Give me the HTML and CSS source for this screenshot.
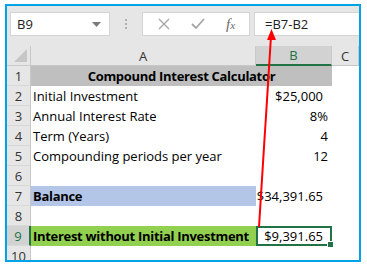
FILE: index.html
```html
<!DOCTYPE html>
<html lang="en">
<head>
    <meta charset="UTF-8">
    <title>Compound Interest Calculator</title>
    <link rel="stylesheet" href="styles.css">
</head>
<body>
    <div class="frame">
        <div class="toolbar">
            <div class="name-box">
                <span>B9</span>
                <svg class="drop" width="9" height="5" viewBox="0 0 9 5"><path d="M0 0h9L4.5 5z" fill="#7a7a7a"/></svg>
            </div>
            <div class="grip"><i></i><i></i><i></i></div>
            <div class="buttons">
                <svg width="14" height="14" viewBox="0 0 14 14"><path d="M2 2l10 10M12 2L2 12" stroke="#a6a6a6" stroke-width="1.4" fill="none"/></svg>
                <svg width="16" height="14" viewBox="0 0 16 14"><path d="M2 7l4 4 8-9" stroke="#a6a6a6" stroke-width="1.8" fill="none"/></svg>
                <span class="fx">f<small>x</small></span>
            </div>
            <div class="formula">=B7-B2</div>
        </div>

        <div class="sheet">
            <div class="corner"><span></span></div>
            <div class="col-head">A</div>
            <div class="col-head active">B</div>
            <div class="col-head">C</div>

            <div class="row-head">1</div>
            <div class="cell title">Compound Interest Calculator</div>
            <div class="cell"></div>

            <div class="row-head">2</div>
            <div class="cell">Initial Investment</div>
            <div class="cell num money">$25,000</div>
            <div class="cell"></div>

            <div class="row-head">3</div>
            <div class="cell">Annual Interest Rate</div>
            <div class="cell num">8%</div>
            <div class="cell"></div>

            <div class="row-head">4</div>
            <div class="cell">Term (Years)</div>
            <div class="cell num">4</div>
            <div class="cell"></div>

            <div class="row-head">5</div>
            <div class="cell">Compounding periods per year</div>
            <div class="cell num">12</div>
            <div class="cell"></div>

            <div class="row-head">6</div>
            <div class="cell"></div>
            <div class="cell"></div>
            <div class="cell"></div>

            <div class="row-head">7</div>
            <div class="cell bold balance">Balance</div>
            <div class="cell num money spill">$34,391.65</div>
            <div class="cell"></div>

            <div class="row-head">8</div>
            <div class="cell"></div>
            <div class="cell"></div>
            <div class="cell"></div>

            <div class="row-head active">9</div>
            <div class="cell bold interest">Interest without Initial Investment</div>
            <div class="cell num money selected">$9,391.65<span class="handle"></span></div>
            <div class="cell"></div>

            <div class="row-head">10</div>
            <div class="cell"></div>
            <div class="cell"></div>
            <div class="cell"></div>
        </div>

        <svg class="arrow" width="356" height="258" viewBox="0 0 356 258">
            <line x1="252" y1="221" x2="264" y2="30" stroke="#ff0000" stroke-width="2"/>
            <path d="M264.5 23l4.5 11h-9z" fill="#ff0000"/>
        </svg>
    </div>
</body>
</html>
```

FILE: styles.css
```css
body {
    margin: 0;
    background-color: #fff;
    font-family: 'Open Sans', sans-serif;
}

.frame {
    position: relative;
    margin: 4px 0 0 5px;
    width: 352px;
    height: 254px;
    border: 2px solid #00a2e8;
    overflow: hidden;
    background-color: #fff;
}

.toolbar {
    height: 40px;
    background-color: #e6e6e6;
    display: flex;
    align-items: flex-start;
    padding-top: 6px;
    box-sizing: border-box;
}

.name-box {
    margin-left: 3px;
    width: 100px;
    height: 24px;
    box-sizing: border-box;
    background-color: #fff;
    border: 1px solid #d4d4d4;
    display: flex;
    align-items: center;
    justify-content: space-between;
    padding: 0 8px 0 6px;
    font-size: 13px;
    color: #222;
}

.grip {
    width: 32px;
    height: 24px;
    display: flex;
    flex-direction: column;
    align-items: center;
    justify-content: center;
    gap: 2px;
}

.grip i {
    width: 2px;
    height: 2px;
    background-color: #b0b0b0;
}

.buttons {
    width: 108px;
    height: 24px;
    box-sizing: border-box;
    background-color: #fff;
    border: 1px solid #d4d4d4;
    display: flex;
    align-items: center;
    justify-content: space-around;
    padding: 0 4px;
}

.fx {
    font-family: 'Liberation Serif', serif;
    font-style: italic;
    font-size: 15px;
    color: #6a6a6a;
}

.fx small {
    font-size: 11px;
}

.formula {
    margin-left: 4px;
    flex: 1;
    height: 24px;
    box-sizing: border-box;
    background-color: #fff;
    border: 1px solid #d4d4d4;
    border-right: none;
    padding-left: 10px;
    font-size: 13px;
    line-height: 22px;
    color: #222;
}

.sheet {
    display: grid;
    grid-template-columns: 24px 225px 76px 1fr;
    grid-template-rows: 20px repeat(10, 20px);
    font-size: 13px;
}

.corner,
.col-head,
.row-head {
    background-color: #e6e6e6;
    color: #333;
    box-sizing: border-box;
    border-right: 1px solid #c8c8c8;
    border-bottom: 1px solid #c8c8c8;
    display: flex;
    align-items: center;
    justify-content: center;
}

.corner {
    position: relative;
}

.corner span {
    position: absolute;
    right: 3px;
    bottom: 3px;
    width: 0;
    height: 0;
    border-left: 13px solid transparent;
    border-bottom: 13px solid #c6c6c6;
}

.col-head.active {
    background-color: #d2d2d2;
    color: #217346;
    border-bottom: 2px solid #217346;
}

.row-head {
    border-bottom-color: #d8d8d8;
}

.row-head.active {
    background-color: #d2d2d2;
    color: #217346;
    border-right: 2px solid #217346;
}

.cell {
    display: flex;
    align-items: center;
    padding: 0 2px;
    white-space: nowrap;
    color: #000;
    box-sizing: border-box;
}

.title {
    grid-column: 2 / 4;
    justify-content: center;
    background-color: #bfbfbf;
    font-weight: bold;
    letter-spacing: -0.3px;
}

.num {
    justify-content: flex-end;
    padding-right: 4px;
}

.money {
    padding-right: 9px;
}

.bold {
    font-weight: bold;
    letter-spacing: -0.3px;
}

.balance {
    background-color: #b4c6e7;
}

.interest {
    background-color: #92d050;
}

.spill {
    overflow: visible;
}

.selected {
    position: relative;
    border: 2px solid #217346;
    padding-right: 7px;
}

.handle {
    position: absolute;
    right: -4px;
    bottom: -4px;
    width: 5px;
    height: 5px;
    background-color: #217346;
    border: 1px solid #fff;
}

.arrow {
    position: absolute;
    left: 0;
    top: 0;
    pointer-events: none;
}
```
